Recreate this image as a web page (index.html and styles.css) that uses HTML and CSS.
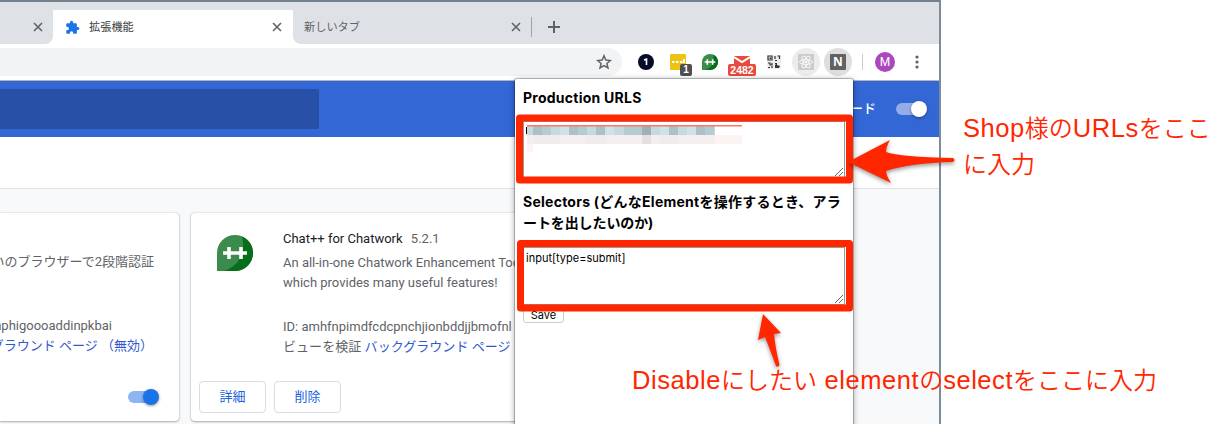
FILE: index.html
```html
<!DOCTYPE html>
<html lang="ja">
<head>
<meta charset="utf-8">
<title>拡張機能</title>
<link rel="stylesheet" href="styles.css">
</head>
<body>
<svg class="defs" width="0" height="0" aria-hidden="true">
  <symbol id="x" viewBox="0 0 10 10"><path d="M1 1l8 8M9 1L1 9" stroke="#5f6368" stroke-width="1.6" fill="none"/></symbol>
  <symbol id="chat" viewBox="0 0 36 36"><path d="M18 0a18 18 0 0 1 0 36H0V18A18 18 0 0 1 18 0z" fill="#3b8b4d"/><path d="M25 1.4A18 18 0 0 1 18 36H6C18 34 30 20 25 1.4z" fill="#056f19"/><path d="M12 12v12M6 18h24M24 12v12" stroke="#fff" stroke-width="3.6" fill="none"/></symbol>
</svg>
<div class="browser">
  <div class="tabs">
    <div class="tab first"><svg class="close"><use href="#x"/></svg></div>
    <div class="tab active">
      <svg class="puzzle" viewBox="0 0 24 24"><path fill="#1a73e8" d="M20.5 11H19V7a2 2 0 0 0-2-2h-4V3.500a2.500 2.500 0 0 0-5 0V5H4a2 2 0 0 0-2 2v3.800h1.500a2.700 2.700 0 0 1 0 5.400H2V20a2 2 0 0 0 2 2h3.800v-1.500a2.700 2.700 0 0 1 5.400 0V22H17a2 2 0 0 0 2-2v-4h1.500a2.500 2.500 0 0 0 0-5z"/></svg>
      <span>拡張機能</span><svg class="close"><use href="#x"/></svg>
    </div>
    <div class="tab last"><span>新しいタブ</span><svg class="close"><use href="#x"/></svg></div>
    <div class="newtab"><svg width="12" height="12" viewBox="0 0 12 12"><path d="M6 0v12M0 6h12" stroke="#5f6368" stroke-width="2"/></svg></div>
  </div>
  <div class="toolbar">
    <div class="omnibox"><svg width="16" height="16" viewBox="0 0 16 16"><path d="M8 1.800l1.800 4.300 4.600.4-3.500 3 1.100 4.500L8 11.600 4 14l1.100-4.500-3.500-3 4.600-.4z" fill="none" stroke="#5f6368" stroke-width="1.500"/></svg></div>
    <div class="exts">
      <div class="ext"><svg width="16" height="16"><circle cx="8" cy="8" r="8" fill="#050d28"/><path d="M6 6l2.500-.8V11" stroke="#fff" stroke-width="1.600" fill="none"/></svg></div>
      <div class="ext"><svg width="16" height="16"><rect width="16" height="16" rx="1" fill="#efc314"/><path d="M2 8h2.500M6 8h2.500M10 8h2.500M14 5v4" stroke="#fff" stroke-width="2"/></svg><b class="badge dark">1</b></div>
      <div class="ext"><svg width="16" height="16"><use href="#chat"/></svg></div>
      <div class="ext"><svg width="16" height="16"><rect y="2" width="16" height="12" fill="#e84a3d"/><path d="M0 3l8 5 8-5" stroke="#fff" stroke-width="2" fill="none"/></svg><b class="badge red">2482</b></div>
      <div class="ext"><svg width="14" height="14" viewBox="0 0 14 14"><rect width="14" height="14" fill="#eee"/><path d="M1 1h4v4H1zM8 1v3M10.500 1h2v3M8 5.500h2M1 8h2v2h2V8M1 12.500h2M5 11v2M8 8.500h2" fill="none" stroke="#333" stroke-width="1.200"/><path d="M2.500 2.500h1.500v1.500H2.500zM10 8v2l3 1-1 2H8v-3z" fill="#333"/></svg></div>
      <div class="ext"><div class="halo"><svg width="16" height="16"><rect width="16" height="16" fill="#ccc"/><g fill="none" stroke="#f7f7f7"><ellipse cx="8" cy="8" rx="6.500" ry="2.500"/><ellipse cx="8" cy="8" rx="6.500" ry="2.500" transform="rotate(60 8 8)"/><ellipse cx="8" cy="8" rx="6.500" ry="2.500" transform="rotate(120 8 8)"/></g><circle cx="8" cy="8" r="1.300" fill="#fff"/></svg></div></div>
      <div class="ext"><div class="halo on"><b class="n">N</b></div></div>
    </div>
    <div class="avatar">M</div>
    <svg class="dots" width="4" height="14"><g fill="#5f6368"><circle cx="2" cy="2" r="1.600"/><circle cx="2" cy="7" r="1.600"/><circle cx="2" cy="12" r="1.600"/></g></svg>
  </div>
  <div class="bluebar"><div class="search"></div><div class="dev">ード</div><div class="switch white"></div></div>
  <div class="actions"></div>
  <div class="cards">
    <div class="card left">
      <div class="desc">いのブラウザーで2段階認証</div>
      <div class="id">nphigoooaddinpkbai</div>
      <div class="view"><a>グラウンド ページ （無効）</a></div>
      <div class="switch blue"></div>
    </div>
    <div class="card right">
      <div class="body">
        <svg width="36" height="36"><use href="#chat"/></svg>
        <div class="info">
          <div class="name">Chat++ for Chatwork <span>5.2.1</span></div>
          <p>An all-in-one Chatwork Enhancement Tool<br>which provides many useful features!</p>
          <div>ID: amhfnpimdfcdcpnchjionbddjjbmofnl</div>
          <div class="rview">ビューを検証 <a>バックグラウンド ページ</a></div>
        </div>
      </div>
      <div class="buttons"><div class="btn">詳細</div><div class="btn">削除</div></div>
    </div>
  </div>
</div>

<div class="popup">
  <h3 class="prod">Production URLS</h3>
  <div class="area a1">
    <svg class="mosaic" width="216" height="28">
      <path d="M0 2h1v7H0z" fill="#000"/>
      <g fill="#c3dbde"><rect x="1" y="1" width="188" height="9"/></g>
      <g fill="#abc1c7"><rect x="7" y="1" width="9" height="9"/><rect x="43" y="1" width="9" height="9"/><rect x="70" y="1" width="9" height="9"/><rect x="116" y="1" width="9" height="9" fill="#9fb1b8"/><rect x="143" y="1" width="9" height="9"/><rect x="170" y="1" width="9" height="9"/></g>
      <g fill="#b4cbcf"><rect x="16" y="1" width="9" height="9"/><rect x="52" y="1" width="9" height="9"/><rect x="98" y="1" width="18" height="9"/><rect x="179" y="1" width="9" height="9"/></g>
      <g fill="#d0e2e8"><rect x="34" y="1" width="9" height="9"/><rect x="79" y="1" width="9" height="9"/><rect x="134" y="1" width="9" height="9"/><rect x="161" y="1" width="9" height="9"/></g>
      <path d="M1 10h188v9H1z" fill="#f4eeee"/><path d="M7 10h27v9H7zM61 10h18v9H61zM134 10h18v9h-18z" fill="#f0ebed"/><path d="M116 10h9v9h-9z" fill="#e6dfe1"/><path d="M189 10h27v9h-27zM1 19h6v8H1z" fill="#fcf4f3"/>
      <path d="M1 0h215v1.400H1z" fill="#ff7765"/>
    </svg>
    <svg class="grip" width="8" height="8"><path d="M0 8L8 0M4 8l4-4" stroke="#666" fill="none"/></svg>
  </div>
  <h3 class="sel">Selectors (どんなElementを操作するとき、アラ<br><span>ートを出したいのか)</span></h3>
  <div class="area a2"><span>input[type=submit]</span><svg class="grip" width="8" height="8"><path d="M0 8L8 0M4 8l4-4" stroke="#666" fill="none"/></svg></div>
  <div class="save">Save</div>
</div>

<svg class="marks" width="1222" height="424">
  <g fill="none" stroke="#ff2600" stroke-width="7" stroke-linejoin="round"><rect x="519.500" y="118" width="330" height="62"/><rect x="520.500" y="243.500" width="329" height="64.500"/></g>
  <g fill="#ff2600" class="arrows"><path d="M848 162L890 140Q886 147 886 152Q900 157 953 158Q956 160 953 162Q910 163 886 171Q886 175 891 183z"/><path d="M763 314L781 333L774 334Q775 346 779.500 365Q778 368 776 366Q769 347 765 337L758 340z"/></g>
</svg>
<div class="note n1"><i>Shop</i>様の<i>URLs</i>をここ<br>に入力</div>
<div class="note n2"><i>Disable</i>にしたい<i> element</i>の<i>select</i>をここに入力</div>
</body>
</html>
```
FILE: styles.css
```css
* { box-sizing: border-box; }
body { margin: 0; width: 1222px; height: 424px; overflow: hidden; position: relative; background: #fff; font-family: Roboto, "Noto Sans CJK JP", sans-serif; }
svg { display: block; flex: none; }
.defs { position: absolute; }
.browser { width: 941px; height: 424px; border-top: 2px solid #748290; border-right: 2px solid #7c8c9c; background: #f8f9fa; overflow: hidden; display: flex; flex-direction: column; }

.tabs { height: 42px; flex: none; display: flex; background: #fff; padding-top: 8px; box-shadow: inset 0 8px #dee1e6; }
.tab { height: 34px; display: flex; align-items: center; font-size: 11.2px; color: #5f6368; background: #dee1e6; }
.tab span { padding-bottom: 2px; }
.close { width: 10px; height: 10px; margin-left: auto; }
.first { width: 53px; padding-right: 10px; border-radius: 0 0 8px 0; }
.active { width: 240px; background: #fff; border-radius: 8px 8px 0 0; padding: 0 11px 0 12px; color: #3c4043; }
.puzzle { width: 15px; height: 15px; margin-right: 9px; }
.last { width: 239px; padding: 0 11px 0 11px; border-radius: 0 0 0 8px; position: relative; }
.last::after { content: ""; position: absolute; right: 0; top: 7px; width: 1px; height: 20px; background: #a0a3a8; }
.newtab { height: 34px; flex: 1; padding: 11px 0 0 16px; background: #dee1e6; }

.toolbar { height: 37px; flex: none; display: flex; align-items: center; background: #fff; border-bottom: 1px solid #b6b6b6; }
.omnibox { width: 622px; height: 28px; background: #f1f3f4; border-radius: 0 14px 14px 0; display: flex; align-items: center; justify-content: flex-end; padding-right: 10px; }
.exts { display: flex; margin-left: 8px; width: 233px; border-right: 1px solid #ccc; height: 16px; align-items: center; }
.ext { width: 32px; display: flex; justify-content: center; position: relative; }
.badge { position: absolute; color: #fff; border-radius: 2px; font: bold 10px/12px "Liberation Sans", sans-serif; text-align: center; }
.dark { background: #505050; width: 12px; height: 12px; left: 18px; top: 10px; }
.red { background: #e84a3d; width: 28px; height: 12px; left: 2px; top: 10px; font-size: 10.5px; }
.halo { width: 28px; height: 28px; border-radius: 50%; background: #ececec; display: flex; align-items: center; justify-content: center; }
.on { background: #dedede; }
.n { width: 16px; height: 16px; border-radius: 1px; background: #626262; color: #fff; font: bold 12px/16px "Noto Sans", sans-serif; text-align: center; }
.avatar { width: 20px; height: 20px; border-radius: 50%; background: #ab47bc; color: #fff; margin-left: 12px; font: 12px/20px Roboto, sans-serif; text-align: center; }
.dots { margin-left: 20px; }

.bluebar { height: 56px; flex: none; background: #3367d6; display: flex; align-items: center; padding-right: 12px; }
.search { width: 319px; height: 40px; background: #2850a7; border-radius: 0 2px 2px 0; }
.dev { margin: 0 19px 4px auto; color: #fff; font-size: 13px; font-weight: 500; }
.switch { width: 32px; height: 16px; display: flex; align-items: center; justify-content: flex-end; position: relative; }
.switch::before { content: ""; position: absolute; left: 1px; top: 2px; width: 28px; height: 12px; border-radius: 6px; background: #94ade9; }
.switch::after { content: ""; position: relative; width: 16px; height: 16px; border-radius: 50%; background: #fff; box-shadow: 0 1px 3px rgba(0,0,0,.4); }
.blue::before { background: #8cb5f4; }
.blue::after { background: #1a73e8; }
.actions { height: 52px; flex: none; background: #fff; border-bottom: 1px solid #dfe1e3; }
.cards { display: flex; gap: 12px; padding-top: 24px; height: 235px; }
.card { height: 208px; background: #fff; border-radius: 4px; box-shadow: 0 1px 2px rgba(60,64,67,.35), 0 0 2px rgba(60,64,67,.3); font-size: 13px; color: #5f6368; line-height: 20px; white-space: nowrap; }
.card a { color: #3058d0; }
.left { width: 179px; border-radius: 0 4px 4px 0; display: flex; flex-direction: column; align-items: flex-end; padding-top: 39px; }
.desc { padding-right: 25px; }
.id { padding-right: 67px; margin-top: 44px; }
.view { padding-right: 26px; }
.left .switch { margin: 33px 20px 0 0; }
.right { width: 400px; }
.body { display: flex; padding: 16px 0 0 26px; height: 168px; }
.body > svg { margin-top: 6px; }
.info { padding-left: 30px; }
.name { color: #202124; }
.name span { color: #5f6368; margin-left: 5px; }
.info p { margin: 4px 0 24px; }
.rview { letter-spacing: .05px; }
.buttons { display: flex; gap: 8px; padding-left: 8px; }
.btn { width: 67px; height: 32px; border: 1px solid #dadce0; border-radius: 4px; color: #1a62e0; text-align: center; line-height: 29px; }

.popup { position: absolute; left: 515px; top: 79px; width: 338px; height: 360px; background: #fff; padding: 8px; border-radius: 2px 2px 0 0; box-shadow: 0 0 0 1px rgba(0,0,0,.22), 0 1px 6px rgba(0,0,0,.4); font-family: Inter, "Noto Sans CJK JP", sans-serif; color: #000; }
.popup h3 { margin: 0; font-size: 14px; line-height: 22px; white-space: nowrap; letter-spacing: .25px; }
.area { width: 322px; height: 56px; border: 1px solid #999; position: relative; font-size: 11px; line-height: 14px; padding: 3px 2px; }
.a1 { margin-top: 12px; height: 57px; }
.a2 { margin-top: 13px; height: 58px; }
.grip { position: absolute; right: 1px; bottom: 1px; }
.popup .sel { padding-top: 13px; height: 56px; line-height: 21px; }
.sel span { letter-spacing: -.1px; }
.save { width: 41px; height: 17px; margin-top: 1px; border: 1px solid #ccc; border-radius: 3px; font-size: 11px; line-height: 16px; text-align: center; }

.marks { position: absolute; left: 0; top: 0; }
.arrows { filter: drop-shadow(0 2px 2px rgba(0,0,0,.4)); }
.note { position: absolute; color: #ff2600; font: 350 24px/36px "Noto Sans CJK JP", sans-serif; white-space: nowrap; letter-spacing: 0; }
.note i { font: normal 25.5px/30px "Liberation Sans", sans-serif; letter-spacing: .55px; }
.n1 { left: 963px; top: 109px; }
.n2 { left: 632px; top: 361px; }
```
